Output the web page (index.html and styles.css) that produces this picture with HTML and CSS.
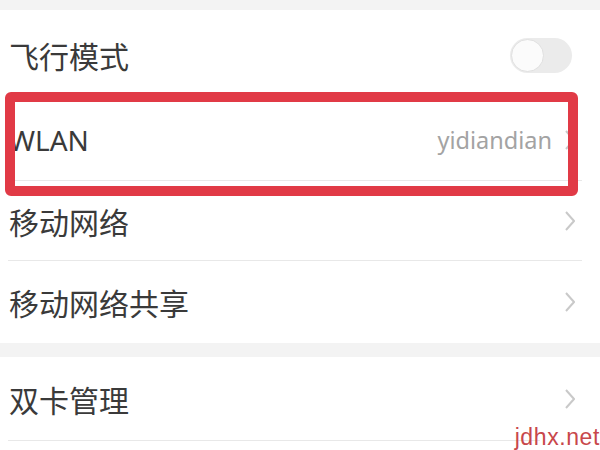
FILE: index.html
```html
<!DOCTYPE html>
<html lang="zh-CN">
<head>
<meta charset="utf-8">
<link rel="stylesheet" href="styles.css">
</head>
<body>
<div class="screen">
  <div class="band band-top"></div>
  <div class="group">
    <div class="row row-first">
      <span class="label">飞行模式</span>
      <span class="toggle"><span class="knob"></span></span>
    </div>
    <div class="row row-wlan">
      <span class="label latin">WLAN</span>
      <span class="value">yidiandian</span>
      <svg class="chev" viewBox="0 0 10 20" width="10" height="20"><path d="M1 1 L9 10 L1 19" fill="none" stroke="#c9c9c9" stroke-width="2"/></svg>
      <span class="highlight"></span>
    </div>
    <div class="sep"></div>
    <div class="row">
      <span class="label">移动网络</span>
      <svg class="chev" viewBox="0 0 10 20" width="10" height="20"><path d="M1 1 L9 10 L1 19" fill="none" stroke="#c9c9c9" stroke-width="2"/></svg>
    </div>
    <div class="sep"></div>
    <div class="row row-share">
      <span class="label">移动网络共享</span>
      <svg class="chev" viewBox="0 0 10 20" width="10" height="20"><path d="M1 1 L9 10 L1 19" fill="none" stroke="#c9c9c9" stroke-width="2"/></svg>
    </div>
  </div>
  <div class="band band-mid"></div>
  <div class="group">
    <div class="row row-dual">
      <span class="label">双卡管理</span>
      <svg class="chev" viewBox="0 0 10 20" width="10" height="20"><path d="M1 1 L9 10 L1 19" fill="none" stroke="#c9c9c9" stroke-width="2"/></svg>
    </div>
    <div class="sep sep-last"></div>
  </div>
  <span class="watermark">jdhx.net</span>
</div>
</body>
</html>
```
FILE: styles.css
```css
* { box-sizing: border-box; }
html, body { margin: 0; padding: 0; }
body {
  width: 600px;
  height: 450px;
  overflow: hidden;
  background: #ffffff;
  font-family: "Noto Sans CJK SC", "Noto Sans", sans-serif;
}
.screen {
  position: relative;
  width: 600px;
  height: 450px;
  display: flex;
  flex-direction: column;
  background: #ffffff;
}
.band { background: #f3f3f3; flex: none; }
.band-top { height: 10px; }
.band-mid { height: 14px; }
.group { display: flex; flex-direction: column; }
.row {
  position: relative;
  display: flex;
  align-items: center;
  height: 79px;
  padding: 0 25px 0 9px;
}
.row-first { height: 90px; padding-right: 28px; }
.row-wlan { height: 80px; }
.row-share { height: 82px; }
.row-dual { height: 83px; }
.label {
  flex: 1;
  font-size: 30px;
  color: #3a3a3a;
  line-height: 1;
}
.latin { font-family: "Noto Sans", sans-serif; font-size: 28px; }
.value {
  font-family: "Noto Sans", sans-serif;
  font-size: 23.5px;
  color: #a3a3a3;
  margin-right: 13px;
}
.chev { flex: none; display: block; }
.sep {
  height: 1px;
  background: #e8e8e8;
  margin: 0 18px 0 8px;
}
.sep-last { margin-right: 60px; }
.toggle {
  flex: none;
  position: relative;
  width: 62px;
  height: 35px;
  border-radius: 18px;
  background: #ebebeb;
}
.knob {
  position: absolute;
  left: 1px;
  top: 1px;
  width: 33px;
  height: 33px;
  border-radius: 50%;
  background: #fbfbfb;
  border: 1px solid #e0e0e0;
}
.highlight {
  position: absolute;
  left: 5px;
  right: 22px;
  top: -8px;
  bottom: -16px;
  border: 10px solid #e13a46;
  border-radius: 6px;
}
.watermark {
  position: absolute;
  right: 0;
  bottom: 0;
  font-family: "Liberation Sans", sans-serif;
  font-size: 23px;
  letter-spacing: 0.6px;
  color: #c8474b;
  line-height: 1;
  padding-bottom: 1px;
}
```
